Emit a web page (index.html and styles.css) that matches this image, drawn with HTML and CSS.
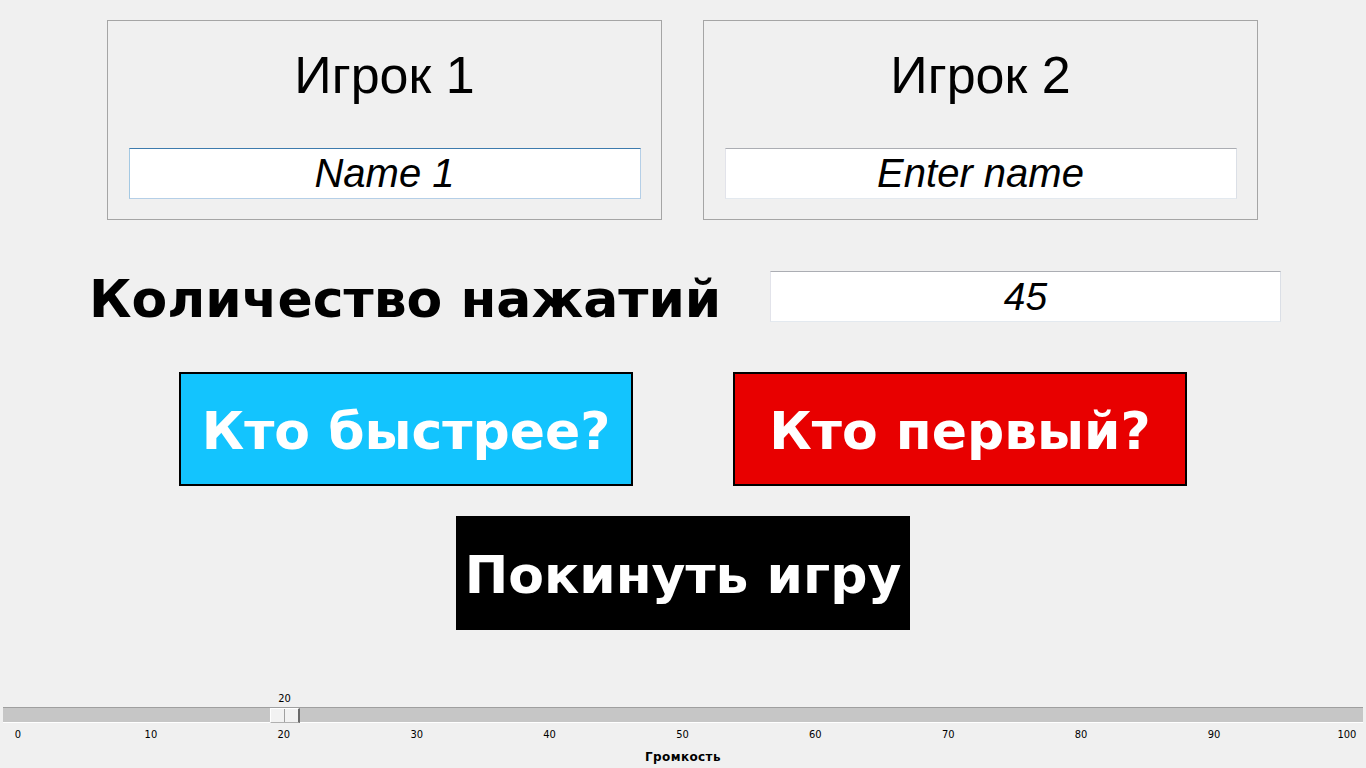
FILE: index.html
```html
<!DOCTYPE html>
<html lang="ru">
<head>
<meta charset="utf-8">
<title>Игра</title>
<link rel="stylesheet" href="styles.css">
</head>
<body>
<main class="app">
  <section class="players">
    <div class="player">
      <h2 class="player-title">Игрок 1</h2>
      <input class="field field-focused" type="text" value="Name 1">
    </div>
    <div class="player">
      <h2 class="player-title">Игрок 2</h2>
      <input class="field" type="text" value="Enter name">
    </div>
  </section>

  <section class="count-row">
    <label class="count-label">Количество нажатий</label>
    <input class="field count-field" type="text" value="45">
  </section>

  <section class="modes">
    <button class="btn btn-fast">Кто быстрее?</button>
    <button class="btn btn-first">Кто первый?</button>
  </section>

  <section class="exit-row">
    <button class="btn btn-exit">Покинуть игру</button>
  </section>

  <section class="volume">
    <div class="track">
      <div class="thumb" style="left: 267px;">
        <span class="thumb-value">20</span>
      </div>
    </div>
    <div class="ticks">
      <span class="tick"><span>0</span></span>
      <span class="tick"><span>10</span></span>
      <span class="tick"><span>20</span></span>
      <span class="tick"><span>30</span></span>
      <span class="tick"><span>40</span></span>
      <span class="tick"><span>50</span></span>
      <span class="tick"><span>60</span></span>
      <span class="tick"><span>70</span></span>
      <span class="tick"><span>80</span></span>
      <span class="tick"><span>90</span></span>
      <span class="tick"><span>100</span></span>
    </div>
    <div class="volume-label">Громкость</div>
  </section>
</main>
</body>
</html>
```

FILE: styles.css
```css
* {
  box-sizing: border-box;
}

html, body {
  margin: 0;
  padding: 0;
}

body {
  width: 1366px;
  height: 768px;
  overflow: hidden;
  background: #f0f0f0;
  color: #000;
  font-family: "Liberation Sans", Arial, sans-serif;
}

.app {
  display: flex;
  flex-direction: column;
}

/* ---------- players ---------- */
.players {
  display: flex;
  gap: 41px;
  padding: 20px 0 0 107px;
}

.player {
  width: 555px;
  height: 200px;
  border: 1px solid #a5a5a5;
  display: flex;
  flex-direction: column;
  align-items: center;
}

.player-title {
  margin: 29px 0 0;
  font-family: "Liberation Sans", Arial, sans-serif;
  font-weight: normal;
  font-size: 52px;
  line-height: 50px;
  height: 50px;
  white-space: nowrap;
}

.field {
  display: block;
  margin: 48px 0 0;
  width: 512px;
  height: 51px;
  padding: 0 4px;
  background: #fff;
  border: 1px solid #e3e9ef;
  border-top-color: #abadb3;
  border-left-color: #e2e3ea;
  border-right-color: #dbdfe6;
  border-radius: 0;
  outline: none;
  text-align: center;
  font-family: "Liberation Sans", Arial, sans-serif;
  font-style: italic;
  font-size: 40px;
  color: #000;
}

.field-focused {
  border-color: #b5cfe7;
  border-top-color: #3d7bad;
  border-left-color: #a4c9e3;
}

/* ---------- count row ---------- */
.count-row {
  display: flex;
  align-items: flex-start;
  margin-top: 51px;
  padding-left: 89px;
}

.count-label {
  width: 681px;
  height: 51px;
  font-family: "DejaVu Sans", sans-serif;
  font-weight: bold;
  font-size: 52px;
  line-height: 57px;
  white-space: nowrap;
}

.count-field {
  margin: 0;
  width: 511px;
  font-size: 39px;
}

/* ---------- buttons ---------- */
.modes {
  display: flex;
  justify-content: center;
  gap: 100px;
  margin-top: 50px;
}

.exit-row {
  display: flex;
  justify-content: center;
  margin-top: 30px;
}

.btn {
  width: 454px;
  height: 114px;
  margin: 0;
  padding: 4px 0 0;
  display: flex;
  align-items: center;
  justify-content: center;
  border: 2px solid #000;
  border-radius: 0;
  color: #fff;
  font-family: "DejaVu Sans", sans-serif;
  font-weight: bold;
  font-size: 52px;
  white-space: nowrap;
  cursor: pointer;
}

.btn-fast {
  background: #13c4fe;
}

.btn-first {
  background: #e80000;
}

.btn-exit {
  background: #000;
  border: none;
}

/* ---------- volume slider ---------- */
.volume {
  margin-top: 77px;
  font-family: "DejaVu Sans Condensed", "DejaVu Sans", sans-serif;
  font-size: 11px;
  line-height: 13px;
}

.track {
  position: relative;
  margin-left: 3px;
  width: 1360px;
  height: 16px;
  background: #c6c6c6;
  border-top: 1px solid #9f9f9f;
  border-bottom: 1px solid #fff;
}

.thumb {
  position: absolute;
  top: 0;
  width: 30px;
  height: 15px;
  background: #f2f2f2;
  border-left: 1px solid #fff;
  border-top: 1px solid #fff;
  border-right: 2px solid #6a6a6a;
  border-bottom: 1px solid #b0b0b0;
}

.thumb::after {
  content: "";
  position: absolute;
  left: 13px;
  top: 0;
  bottom: 0;
  width: 1px;
  background: #a0a0a0;
}

.thumb-value {
  position: absolute;
  left: 50%;
  top: -17px;
  transform: translateX(-50%);
  color: #000;
}

.ticks {
  display: flex;
  justify-content: space-between;
  margin: 5px 19px 0 18px;
}

.tick {
  width: 0;
  display: flex;
  justify-content: center;
}

.volume-label {
  margin-top: 10px;
  text-align: center;
  font-family: "DejaVu Sans", sans-serif;
  font-weight: bold;
  font-size: 12px;
  letter-spacing: 0.4px;
}
```
